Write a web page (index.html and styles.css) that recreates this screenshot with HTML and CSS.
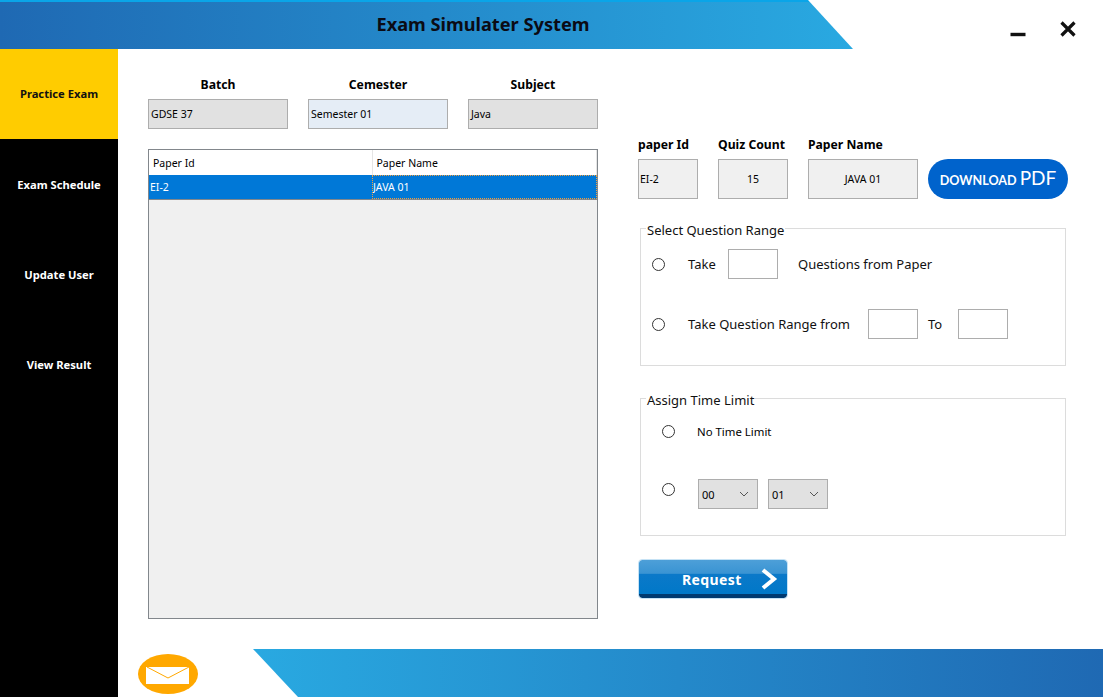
FILE: index.html
```html
<!DOCTYPE html>
<html lang="en">
<head>
    <meta charset="UTF-8">
    <meta name="viewport" content="width=device-width, initial-scale=1.0">
    <title>Exam Simulater System</title>
    <link rel="stylesheet" href="styles.css">
</head>
<body>
    <div class="app">
        <header class="topbar">
            <div class="banner">
                <h1>Exam Simulater System</h1>
            </div>
            <div class="window-buttons">
                <button class="win-btn" aria-label="Minimize">
                    <svg width="16" height="16" viewBox="0 0 16 16"><path d="M0.5 13.5h15" stroke="#111" stroke-width="3.4" fill="none"/></svg>
                </button>
                <button class="win-btn" aria-label="Close">
                    <svg width="16" height="16" viewBox="0 0 16 16"><path d="M1.5 1.5l13 13M14.5 1.5l-13 13" stroke="#111" stroke-width="3.2" fill="none"/></svg>
                </button>
            </div>
        </header>

        <div class="middle">
            <nav class="sidebar">
                <a class="nav-item active">Practice Exam</a>
                <a class="nav-item">Exam Schedule</a>
                <a class="nav-item">Update User</a>
                <a class="nav-item">View Result</a>
            </nav>

            <div class="content">
                <main class="main">
                    <section class="left-col">
                        <div class="filters">
                            <div class="field">
                                <label>Batch</label>
                                <div class="combo">GDSE 37</div>
                            </div>
                            <div class="field">
                                <label>Cemester</label>
                                <div class="combo combo-focus">Semester 01</div>
                            </div>
                            <div class="field">
                                <label>Subject</label>
                                <div class="combo">Java</div>
                            </div>
                        </div>
                        <div class="table-box">
                            <table class="papers">
                                <thead>
                                    <tr><th class="col-id">Paper Id</th><th>Paper Name</th></tr>
                                </thead>
                                <tbody>
                                    <tr><td>EI-2</td><td class="cell-focus">JAVA 01</td></tr>
                                </tbody>
                            </table>
                        </div>
                    </section>

                    <section class="right-col">
                        <div class="paper-info">
                            <div class="info w60">
                                <label>paper Id</label>
                                <div class="info-box left">EI-2</div>
                            </div>
                            <div class="info w70">
                                <label>Quiz Count</label>
                                <div class="info-box">15</div>
                            </div>
                            <div class="info w110">
                                <label>Paper Name</label>
                                <div class="info-box">JAVA 01</div>
                            </div>
                            <button class="pdf-btn">DOWNLOAD <span>PDF</span></button>
                        </div>

                        <fieldset class="group range-group">
                            <legend>Select Question Range</legend>
                            <div class="row">
                                <input type="radio" name="range" class="radio">
                                <span class="txt take">Take</span>
                                <input type="text" class="num">
                                <span class="txt after-num">Questions from Paper</span>
                            </div>
                            <div class="row">
                                <input type="radio" name="range" class="radio">
                                <span class="txt take-range">Take Question Range from</span>
                                <input type="text" class="num">
                                <span class="txt to">To</span>
                                <input type="text" class="num">
                            </div>
                        </fieldset>

                        <fieldset class="group time-group">
                            <legend>Assign Time Limit</legend>
                            <div class="time-row first">
                                <input type="radio" name="time" class="radio">
                                <span class="small-txt">No Time Limit</span>
                            </div>
                            <div class="time-row selects">
                                <input type="radio" name="time" class="radio raised">
                                <div class="select">00
                                    <svg width="10" height="6" viewBox="0 0 10 6"><path d="M1 1l4 4 4-4" stroke="#555" fill="none"/></svg>
                                </div>
                                <div class="select">01
                                    <svg width="10" height="6" viewBox="0 0 10 6"><path d="M1 1l4 4 4-4" stroke="#555" fill="none"/></svg>
                                </div>
                            </div>
                        </fieldset>

                        <button class="request-btn">
                            Request
                            <svg width="18" height="22" viewBox="0 0 18 22"><path d="M3 2l11 9-11 9" stroke="#fff" stroke-width="4" fill="none"/></svg>
                        </button>
                    </section>
                </main>

                <footer class="footer">
                    <div class="mail">
                        <svg width="60" height="40" viewBox="0 0 60 40">
                            <ellipse cx="30" cy="20" rx="30" ry="20" fill="#ffa800"/>
                            <rect x="8" y="13" width="43" height="17" fill="#fff"/>
                            <path d="M9 13l21 11 21-11" stroke="#ffa800" stroke-width="1" fill="none"/>
                        </svg>
                    </div>
                    <div class="footer-banner"></div>
                </footer>
            </div>
        </div>
    </div>
</body>
</html>
```

FILE: styles.css
```css
* {
    box-sizing: border-box;
}
body {
    margin: 0;
    background: white;
    font-family: "Noto Sans", Arial, sans-serif;
    color: #000;
}
.app {
    width: 1103px;
    height: 697px;
    display: flex;
    flex-direction: column;
    overflow: hidden;
}

/* top bar */
.topbar {
    height: 49px;
    display: flex;
    flex-shrink: 0;
}
.banner {
    width: 853px;
    height: 49px;
    padding-left: 113px;
    background: linear-gradient(90deg, #1f69b3, #29a9e1);
    border-top: 2px solid #0aa5e8;
    clip-path: polygon(0 0, 808px 0, 100% 100%, 0 100%);
}
.banner h1 {
    margin: 0;
    text-align: center;
    font-size: 18.2px;
    line-height: 44px;
    font-weight: 700;
    color: #0b0b14;
}
.window-buttons {
    display: flex;
    gap: 34px;
    padding: 21px 0 0 157px;
}
.win-btn {
    width: 16px;
    height: 16px;
    padding: 0;
    border: none;
    background: none;
    cursor: pointer;
}

/* sidebar */
.middle {
    flex: 1;
    display: flex;
    min-height: 0;
}
.sidebar {
    width: 118px;
    background: #000;
    flex-shrink: 0;
}
.nav-item {
    height: 90px;
    display: flex;
    align-items: center;
    justify-content: center;
    color: white;
    font-size: 11.2px;
    font-weight: 700;
    cursor: pointer;
}
.nav-item.active {
    padding-bottom: 1px;
    background: #ffcc00;
    color: #111;
}

/* main area */
.content {
    flex: 1;
    display: flex;
    flex-direction: column;
    min-width: 0;
}
.main {
    flex: 1;
    display: flex;
    padding-left: 30px;
    gap: 40px;
}
.left-col {
    width: 450px;
    padding-top: 27px;
}
.filters {
    display: flex;
    gap: 20px;
}
.field {
    width: 140px;
}
.field:last-child {
    width: 130px;
}
.field label {
    display: block;
    text-align: center;
    font-size: 12.2px;
    font-weight: 700;
    line-height: 18px;
    margin-bottom: 5px;
}
.combo {
    height: 30px;
    padding-left: 2px;
    font-size: 10.5px;
    line-height: 28px;
    background: #e1e1e1;
    border: 1px solid #adadad;
}
.combo-focus {
    background: #e5edf6;
}
.table-box {
    margin-top: 20px;
    height: 470px;
    background: #f0f0f0;
    border: 1px solid #82878c;
}
.papers {
    width: 100%;
    border-collapse: collapse;
    table-layout: fixed;
    font-size: 10.5px;
}
.papers th {
    height: 25px;
    padding: 0 4px;
    background: white;
    font-weight: 400;
    text-align: left;
    border-right: 1px solid #e5e5e5;
}
.papers .col-id {
    width: 223px;
}
.papers td {
    height: 24px;
    padding: 0 0 0 1px;
    background: #0078d7;
    color: white;
    border-bottom: 1px solid #82878c;
}
.papers .cell-focus {
    outline: 1px dotted #f0a040;
    outline-offset: -1px;
}

/* right column */
.right-col {
    width: 430px;
    padding-top: 87px;
}
.paper-info {
    display: flex;
    gap: 20px;
    align-items: flex-end;
}
.info label {
    display: block;
    font-size: 12.2px;
    font-weight: 700;
    line-height: 18px;
    margin-bottom: 5px;
    white-space: nowrap;
}
.w60 { width: 60px; }
.w70 { width: 70px; }
.w110 { width: 110px; }
.info-box {
    height: 40px;
    background: #f0f0f0;
    border: 1px solid #adadad;
    font-size: 10.5px;
    line-height: 38px;
    text-align: center;
}
.info-box.left {
    text-align: left;
    padding-left: 1px;
}
.pdf-btn {
    width: 140px;
    height: 40px;
    margin-left: -10px;
    padding: 0 0 4px;
    border: none;
    border-radius: 20px;
    background: #0063cc;
    color: white;
    font-family: Lato, sans-serif;
    font-size: 12.6px;
    font-weight: 700;
    cursor: pointer;
}
.pdf-btn span {
    font-size: 19px;
    font-weight: 400;
}

.group {
    width: 426px;
    margin: 0 0 0 2px;
    padding: 0 5px;
    border: 1px solid #dcdcdc;
    min-width: 0;
}
.group legend {
    padding: 3px 1px 0;
    font-size: 13px;
    line-height: 18px;
    color: #111;
}
.range-group {
    height: 148px;
    margin-top: 19px;
}
.time-group {
    height: 148px;
    margin-top: 22px;
}
.radio {
    appearance: none;
    width: 13px;
    height: 13px;
    margin: 0;
    background: white;
    border: 1px solid #333;
    border-radius: 50%;
}
.row {
    display: flex;
    align-items: center;
    height: 30px;
    margin: 0 0 30px 6px;
    font-size: 13px;
}
.row:first-of-type {
    margin-top: 10px;
}
.txt {
    white-space: nowrap;
    color: #111;
}
.take {
    margin-left: 23px;
    width: 40px;
}
.after-num {
    margin-left: 20px;
}
.take-range {
    margin-left: 23px;
    width: 180px;
}
.to {
    width: 30px;
    margin-left: 10px;
}
.num {
    width: 50px;
    height: 30px;
    padding: 0;
    background: white;
    border: 1px solid #adadad;
}
.time-row {
    display: flex;
    align-items: center;
    margin-left: 16px;
    height: 30px;
}
.time-row.first {
    margin-top: 7px;
}
.small-txt {
    margin-left: 22px;
    font-size: 11.4px;
}
.selects {
    margin-top: 33px;
    gap: 10px;
}
.raised {
    margin: -10px 13px 0 0;
}
.select {
    width: 60px;
    height: 30px;
    padding: 0 8px 0 3px;
    display: flex;
    align-items: center;
    justify-content: space-between;
    background: #e1e1e1;
    border: 1px solid #adadad;
    font-size: 11px;
}
.request-btn {
    width: 148px;
    height: 38px;
    margin: 24px 0 0 1px;
    padding: 0 9px 0 43px;
    display: flex;
    align-items: center;
    justify-content: space-between;
    background: linear-gradient(180deg, #4d9fd8 0, #3a94d3 35%, #0b79c9 38%, #0078c8 90%, #003a70 90%, #003a70 100%);
    border: none;
    border-radius: 3px;
    outline: 1px solid #c5e2f5;
    color: white;
    font-family: "Noto Sans", Arial, sans-serif;
    font-size: 14px;
    font-weight: 700;
    letter-spacing: 0.4px;
    cursor: pointer;
}

/* footer */
.footer {
    height: 48px;
    display: flex;
    flex-shrink: 0;
    padding-left: 20px;
    gap: 55px;
}
.mail {
    width: 60px;
    height: 40px;
    margin-top: 5px;
}
.footer-banner {
    flex: 1;
    background: linear-gradient(90deg, #29a9e1, #1f69b3);
    clip-path: polygon(0 0, 100% 0, 100% 100%, 45px 100%);
}
```
